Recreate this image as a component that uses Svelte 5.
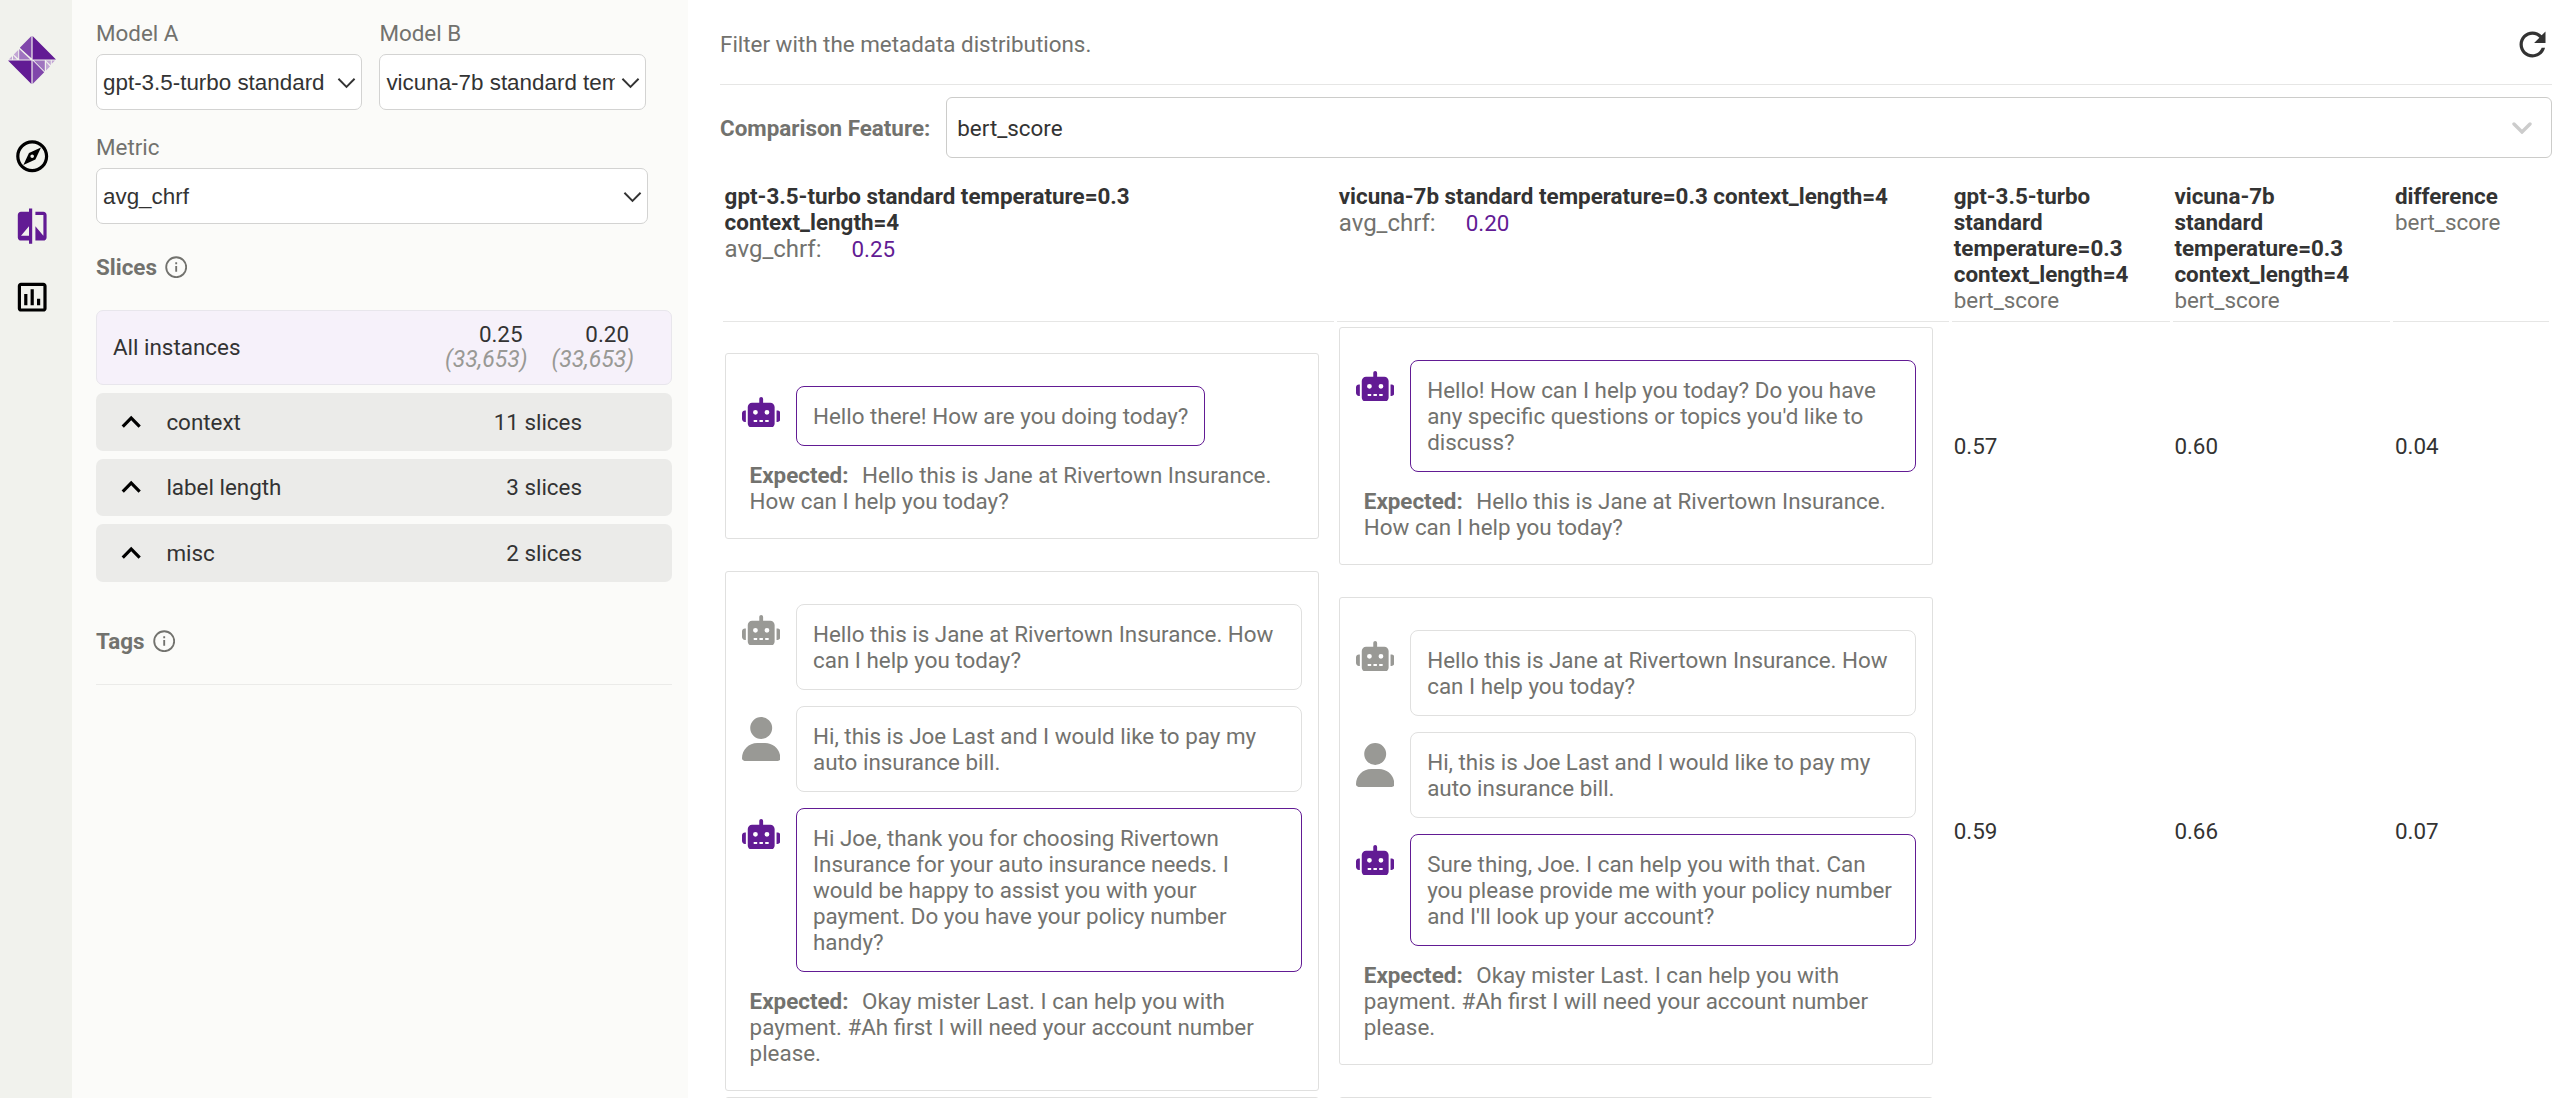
<script>
  const slices = [
    { name: 'context', count: '11 slices' },
    { name: 'label length', count: '3 slices' },
    { name: 'misc', count: '2 slices' }
  ];

  const opening = { who: 'bot', text: 'Hello this is Jane at Rivertown Insurance. How can I help you today?' };
  const request = { who: 'user', text: 'Hi, this is Joe Last and I would like to pay my auto insurance bill.' };
  const expectedGreeting = 'Hello this is Jane at Rivertown Insurance. How can I help you today?';
  const expectedAccount =
    'Okay mister Last. I can help you with payment. #Ah first I will need your account number please.';

  const rows = [
    {
      chats: [
        {
          messages: [{ who: 'bot', output: true, text: 'Hello there! How are you doing today?' }],
          expected: expectedGreeting
        },
        {
          messages: [
            {
              who: 'bot',
              output: true,
              text: "Hello! How can I help you today? Do you have any specific questions or topics you'd like to discuss?"
            }
          ],
          expected: expectedGreeting
        }
      ],
      values: ['0.57', '0.60', '0.04']
    },
    {
      chats: [
        {
          messages: [
            opening,
            request,
            {
              who: 'bot',
              output: true,
              text: 'Hi Joe, thank you for choosing Rivertown Insurance for your auto insurance needs. I would be happy to assist you with your payment. Do you have your policy number handy?'
            }
          ],
          expected: expectedAccount
        },
        {
          messages: [
            opening,
            request,
            {
              who: 'bot',
              output: true,
              text: "Sure thing, Joe. I can help you with that. Can you please provide me with your policy number and I'll look up your account?"
            }
          ],
          expected: expectedAccount
        }
      ],
      values: ['0.59', '0.66', '0.07']
    },
    { chats: [{ messages: [] }, { messages: [] }], values: ['', '', ''] }
  ];
</script>

{#snippet caret()}
  <svg class="caret" viewBox="0 0 20 12"><path d="M1.5 1.5 10 10.2 18.5 1.5" /></svg>
{/snippet}

{#snippet info()}
  <svg class="info" viewBox="0 0 24 24">
    <circle cx="12" cy="12" r="10.7" />
    <path d="M12 10.8v6.2M12 6.8v2" />
  </svg>
{/snippet}

<div class="app">
  <nav>
    <svg class="logo" viewBox="0 0 48 48">
      <path class="dark" d="M24.6 0 48 23.4H24.6zM0 24.6h23.4V48z" />
      <path class="mid" d="M23.4 0v22.2L11.8 11.8zM24.6 24.6l11.6 11.6L24.6 48z" />
      <path class="soft" d="M11.2 13 22.4 23.4H11.2zM25.8 24.6H36.8v10.8z" />
      <path class="pale" d="M10.2 14v8.6L5.8 18.4zM5 19.2l4 4.2H5zM37.8 24.6h5v4.6zM38 26v8.4l4-4zM4 20.2v3.2H.8zM43.8 24.6H47l-3.2 3.2z" />
    </svg>
    <svg viewBox="0 0 24 24"><path d="M12 2C6.48 2 2 6.48 2 12s4.48 10 10 10 10-4.48 10-10S17.52 2 12 2zm0 18c-4.41 0-8-3.59-8-8s3.59-8 8-8 8 3.59 8 8-3.59 8-8 8zm-5.5-2.5l7.51-3.49L17.5 6.5 9.99 9.99 6.5 17.5zm5.5-6.6c.61 0 1.1.49 1.1 1.1s-.49 1.1-1.1 1.1-1.1-.49-1.1-1.1.49-1.1 1.1-1.1z" /></svg>
    <svg class="active" viewBox="0 0 24 24"><path d="M10 3H5c-1.1 0-2 .9-2 2v14c0 1.1.9 2 2 2h5v2h2V1h-2v2zm0 15H5l5-6v6zm9-15h-5v2h5v13l-5-6v9h5c1.1 0 2-.9 2-2V5c0-1.1-.9-2-2-2z" /></svg>
    <svg viewBox="0 0 24 24"><path d="M19 3H5c-1.1 0-2 .9-2 2v14c0 1.1.9 2 2 2h14c1.1 0 2-.9 2-2V5c0-1.1-.9-2-2-2zm0 16H5V5h14v14zM7 10h2v7H7zm4-3h2v10h-2zm4 6h2v4h-2z" /></svg>
  </nav>

  <aside>
    <div class="models">
      <div class="field">
        <span>Model A</span>
        <div class="select"><span class="value">gpt-3.5-turbo standard</span>{@render caret()}</div>
      </div>
      <div class="field">
        <span>Model B</span>
        <div class="select"><span class="value">vicuna-7b standard temperature=0.3</span>{@render caret()}</div>
      </div>
    </div>
    <div class="field metric">
      <span>Metric</span>
      <div class="select"><span class="value">avg_chrf</span>{@render caret()}</div>
    </div>

    <h4>Slices {@render info()}</h4>
    <div class="all">
      <span class="name">All instances</span>
      <div class="score"><span>0.25</span><i>(33,653)</i></div>
      <div class="score"><span>0.20</span><i>(33,653)</i></div>
    </div>
    {#each slices as slice}
      <div class="folder">
        <svg viewBox="0 0 24 24"><path d="M7.41 15.41 12 10.83l4.59 4.58L18 14l-6-6-6 6z" /></svg>
        <span>{slice.name}</span>
        <span class="count">{slice.count}</span>
      </div>
    {/each}
    <h4 class="tags">Tags {@render info()}</h4>
  </aside>

  <main>
    <header>
      <span>Filter with the metadata distributions.</span>
      <svg viewBox="0 0 24 24"><path d="M17.65 6.35C16.2 4.9 14.21 4 12 4c-4.42 0-7.99 3.58-7.99 8s3.57 8 7.99 8c3.73 0 6.84-2.55 7.73-6h-2.08c-.82 2.33-3.04 4-5.65 4-3.31 0-6-2.69-6-6s2.69-6 6-6c1.66 0 3.14.69 4.22 1.78L13 11h7V4l-2.35 2.35z" /></svg>
    </header>
    <div class="feature">
      <b>Comparison Feature:</b>
      <div class="picker">
        <span>bert_score</span>
        <svg viewBox="0 0 20 12"><path d="M2 2l8 8 8-8" /></svg>
      </div>
    </div>

    <table>
      <thead>
        <tr>
          <th class="chat-col">gpt-3.5-turbo standard temperature=0.3 context_length=4<p class="metric-line">avg_chrf: <em>0.25</em></p></th>
          <th class="chat-col second">vicuna-7b standard temperature=0.3 context_length=4<p class="metric-line">avg_chrf: <em>0.20</em></p></th>
          <th class="val-col">gpt-3.5-turbo standard temperature=0.3 context_length=4<p>bert_score</p></th>
          <th class="val-col">vicuna-7b standard temperature=0.3 context_length=4<p>bert_score</p></th>
          <th>difference<p>bert_score</p></th>
        </tr>
      </thead>
      <tbody>
        {#each rows as row}
          <tr>
            {#each row.chats as chat}
              <td>
                <div class="card">
                  {#each chat.messages as message}
                    <div class="message" class:output={message.output}>
                      {#if message.who === 'bot'}
                        <svg viewBox="0 0 640 512"><path d="M320 0c17.7 0 32 14.3 32 32V96H472c39.8 0 72 32.2 72 72V440c0 39.8-32.2 72-72 72H168c-39.8 0-72-32.2-72-72V168c0-39.8 32.2-72 72-72H288V32c0-17.7 14.3-32 32-32zM208 384c-8.8 0-16 7.2-16 16s7.2 16 16 16h32c8.8 0 16-7.2 16-16s-7.2-16-16-16H208zm96 0c-8.8 0-16 7.2-16 16s7.2 16 16 16h32c8.8 0 16-7.2 16-16s-7.2-16-16-16H304zm96 0c-8.8 0-16 7.2-16 16s7.2 16 16 16h32c8.8 0 16-7.2 16-16s-7.2-16-16-16H400zM264 256a40 40 0 1 0 -80 0 40 40 0 1 0 80 0zm152 40a40 40 0 1 0 0-80 40 40 0 1 0 0 80zM48 224H64V416H48c-26.5 0-48-21.5-48-48V272c0-26.5 21.5-48 48-48zm544 0c26.5 0 48 21.5 48 48v96c0 26.5-21.5 48-48 48H576V224h16z" /></svg>
                      {:else}
                        <svg viewBox="0 0 448 512"><path d="M224 256A128 128 0 1 0 224 0a128 128 0 1 0 0 256zm-45.7 48C79.8 304 0 383.8 0 482.3C0 498.7 13.3 512 29.7 512H418.3c16.4 0 29.7-13.3 29.7-29.7C448 383.8 368.2 304 269.7 304H178.3z" /></svg>
                      {/if}
                      <div class="bubble">{message.text}</div>
                    </div>
                  {/each}
                  {#if chat.expected}
                    <div class="expected"><b>Expected:</b> {chat.expected}</div>
                  {/if}
                </div>
              </td>
            {/each}
            {#each row.values as value}
              <td class="value-cell">{value}</td>
            {/each}
          </tr>
        {/each}
      </tbody>
    </table>
  </main>
</div>

<style>
  :global(body) {
    overflow: hidden;
  }
  .app {
    display: flex;
    width: 2566px;
    height: 1098px;
    overflow: hidden;
    background: #fff;
    color: #72726e;
    font: 22.4px/26px Roboto, sans-serif;
  }
  .app * {
    box-sizing: border-box;
  }
  svg {
    display: block;
    flex: none;
  }

  nav {
    width: 72px;
    flex: none;
    background: #f1f2ed;
    display: flex;
    flex-direction: column;
    align-items: center;
    gap: 32px;
    padding: 36px 8px 0 0;
  }
  nav svg {
    width: 38.4px;
    height: 38.4px;
    fill: #000;
  }
  nav .logo {
    width: 48px;
    height: 48px;
    margin-bottom: 21px;
  }
  nav .active,
  .dark {
    fill: #621b94;
  }
  .mid { fill: #8047ab; }
  .soft { fill: #9f74bf; }
  .pale { fill: #c2a6d5; }

  aside {
    width: 616px;
    flex: none;
    background: #fbfbf9;
    padding: 20px 16px 0 24px;
  }
  .models {
    display: flex;
    gap: 17px;
  }
  .field {
    width: 266.4px;
    display: flex;
    flex-direction: column;
    gap: 8px;
  }
  .metric {
    width: 552px;
    margin-top: 24px;
  }
  .select {
    height: 56px;
    border: 1px solid #d3d3d2;
    border-radius: 7px;
    background: #fff;
    color: #333;
    font-family: 'Liberation Sans', Arial, sans-serif;
    display: flex;
    align-items: center;
    gap: 6px;
    padding: 1px 5px 0 6px;
  }
  .value {
    flex: 1;
    overflow: hidden;
    white-space: nowrap;
  }
  .caret {
    width: 19px;
    height: 12px;
    fill: none;
    stroke: #333;
    stroke-width: 2;
  }
  h4 {
    margin: 30px 0;
    font-size: inherit;
    display: flex;
    align-items: center;
    gap: 8px;
  }
  .info {
    width: 22.4px;
    height: 22.4px;
    fill: none;
    stroke: #72726e;
    stroke-width: 2;
  }
  .all {
    height: 75px;
    border: 1px solid #e8e6ec;
    border-radius: 7px;
    background: #f6f1fa;
    color: #333;
    display: flex;
    align-items: center;
    gap: 24px;
    padding: 0 37px 2px 16px;
    margin-bottom: 8px;
  }
  .name {
    flex: 1;
  }
  .score {
    display: flex;
    flex-direction: column;
    align-items: flex-end;
  }
  .score span {
    margin-right: 5px;
  }
  .score i {
    color: #999995;
    font-size: 23px;
  }
  .folder {
    height: 57.6px;
    margin-bottom: 8px;
    border-radius: 7px;
    background: #ebebe9;
    color: #333;
    display: flex;
    align-items: center;
    padding: 0 90px 0 16px;
  }
  .folder svg {
    width: 38.4px;
    height: 38.4px;
    fill: #000;
    margin-right: 16px;
  }
  .count {
    margin-left: auto;
  }
  .tags {
    margin: 46px 0 0;
    padding-bottom: 30px;
    border-bottom: 1px solid #ebebe9;
  }

  main {
    flex: 1;
    padding: 0 14px 0 32px;
  }
  header {
    height: 85px;
    border-bottom: 1px solid #e6e6e5;
    display: flex;
    align-items: center;
    justify-content: space-between;
    padding-top: 4px;
  }
  header svg {
    width: 39px;
    height: 39px;
    fill: #333;
  }
  .feature {
    margin-top: 12px;
    display: flex;
    align-items: center;
    gap: 16px;
  }
  .picker {
    flex: 1;
    height: 61px;
    border: 1px solid #ccccca;
    border-radius: 6px;
    color: #333;
    display: flex;
    align-items: center;
    justify-content: space-between;
    padding: 0 19px 0 10px;
  }
  .picker svg {
    width: 20px;
    height: 12px;
    fill: none;
    stroke: #ccc;
    stroke-width: 3.4;
    stroke-linecap: round;
  }

  table {
    width: 1832px;
    margin-top: 20px;
    table-layout: fixed;
    border-spacing: 3.2px;
  }
  th {
    height: 141px;
    padding: 1.6px 32px 8px 1.6px;
    border-bottom: 1px solid #e6e6e5;
    text-align: left;
    vertical-align: top;
    color: #333;
  }
  th:last-child {
    padding-right: 0;
  }
  .chat-col {
    width: 611.2px;
  }
  .second {
    width: 612px;
  }
  .val-col {
    width: 217.6px;
  }
  th p {
    margin: 0;
    font-weight: 400;
    color: #72726e;
  }
  .metric-line {
    font-size: 24px;
    line-height: 28px;
  }
  em {
    font-size: 22.4px;
    font-style: normal;
    color: #621b94;
    margin-left: 24px;
  }
  td {
    padding: 1.6px;
    vertical-align: middle;
  }
  .value-cell {
    color: #333;
  }
  .card {
    width: 594px;
    min-height: 60px;
    border: 1px solid #e0e0df;
    border-radius: 3px;
    padding: 32px 16px 24px;
  }
  .message {
    display: flex;
    align-items: flex-start;
    gap: 16px;
    margin-bottom: 16px;
  }
  .message svg {
    width: 38.4px;
    margin-top: 11px;
    fill: #999995;
  }
  .bubble {
    border: 1px solid #e0e0df;
    border-radius: 8px;
    padding: 16px;
  }
  .output svg {
    fill: #621b94;
  }
  .output .bubble {
    border-color: #621b94;
  }
  .expected {
    margin-left: 8px;
  }
  .expected b {
    margin-right: 8px;
  }
</style>
